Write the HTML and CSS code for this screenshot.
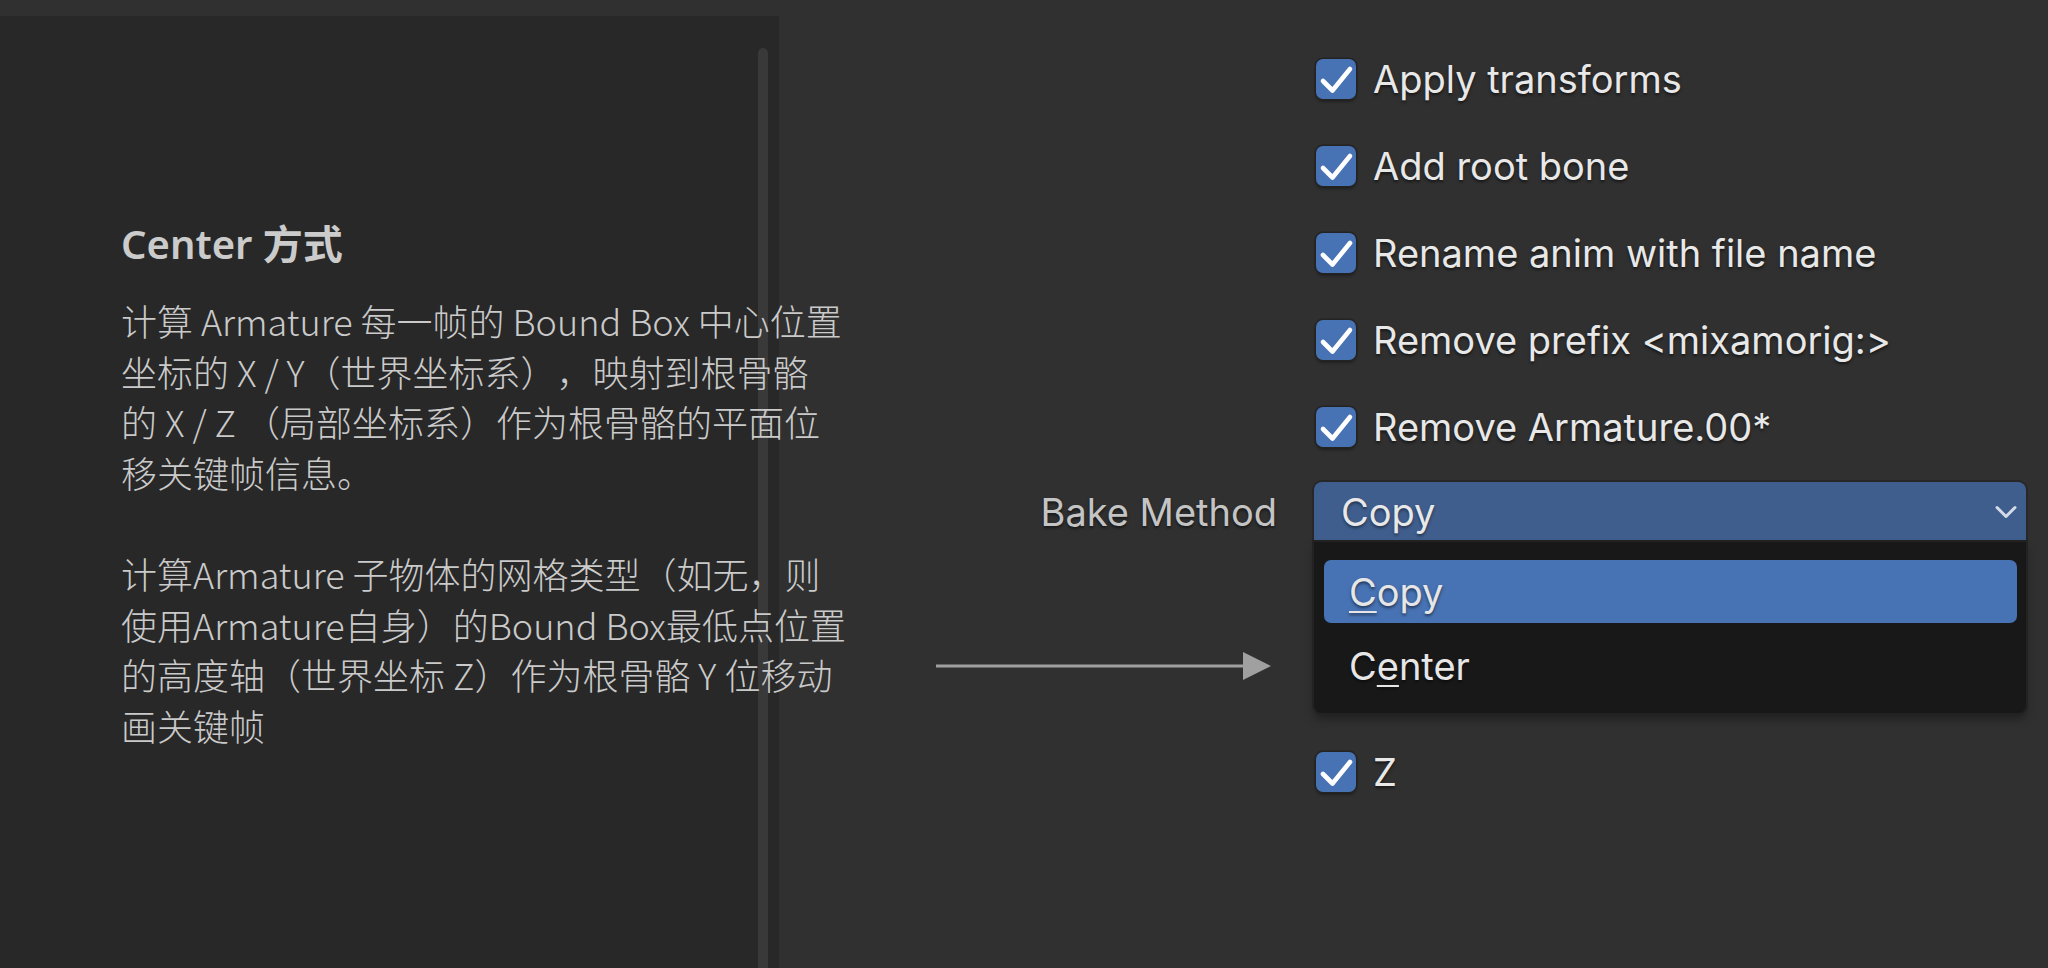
FILE: index.html
```html
<!DOCTYPE html>
<html lang="zh-CN">
<head>
<meta charset="utf-8">
<title>Bake Method</title>
<link rel="stylesheet" href="styles.css">
</head>
<body>
<div class="app">
  <aside class="outline">
    <div class="outline-body">
      <div class="note">
        <h2 class="note-title">Center 方式</h2>
        <p class="note-text">计算 Armature 每一帧的 Bound Box 中心位置<br>坐标的 X / Y（世界坐标系），映射到根骨骼<br>的 X / Z （局部坐标系）作为根骨骼的平面位<br>移关键帧信息。</p>
        <p class="note-text">计算Armature 子物体的网格类型（如无，则<br>使用Armature自身）的Bound Box最低点位置<br>的高度轴（世界坐标 Z）作为根骨骼 Y 位移动<br>画关键帧</p>
      </div>
    </div>
    <div class="scrollbar"></div>
  </aside>

  <section class="props">
    <svg class="arrow" width="335" height="28" viewBox="0 0 335 28">
      <line x1="0" y1="14" x2="308" y2="14" stroke="#a0a0a0" stroke-width="3"/>
      <polygon points="307,0 335,14 307,28" fill="#a0a0a0"/>
    </svg>

    <div class="prop-list">
      <div class="check-row"><span class="check"><svg viewBox="0 0 40 40" width="40" height="40"><path d="M7 22 L16.5 31.5 L34 10" fill="none" stroke="#fff" stroke-width="4.6" stroke-linejoin="round" stroke-linecap="round"/></svg></span><span class="check-label">Apply transforms</span></div>
      <div class="check-row"><span class="check"><svg viewBox="0 0 40 40" width="40" height="40"><path d="M7 22 L16.5 31.5 L34 10" fill="none" stroke="#fff" stroke-width="4.6" stroke-linejoin="round" stroke-linecap="round"/></svg></span><span class="check-label">Add root bone</span></div>
      <div class="check-row"><span class="check"><svg viewBox="0 0 40 40" width="40" height="40"><path d="M7 22 L16.5 31.5 L34 10" fill="none" stroke="#fff" stroke-width="4.6" stroke-linejoin="round" stroke-linecap="round"/></svg></span><span class="check-label">Rename anim with file name</span></div>
      <div class="check-row"><span class="check"><svg viewBox="0 0 40 40" width="40" height="40"><path d="M7 22 L16.5 31.5 L34 10" fill="none" stroke="#fff" stroke-width="4.6" stroke-linejoin="round" stroke-linecap="round"/></svg></span><span class="check-label">Remove prefix &lt;mixamorig:&gt;</span></div>
      <div class="check-row"><span class="check"><svg viewBox="0 0 40 40" width="40" height="40"><path d="M7 22 L16.5 31.5 L34 10" fill="none" stroke="#fff" stroke-width="4.6" stroke-linejoin="round" stroke-linecap="round"/></svg></span><span class="check-label">Remove Armature.00*</span></div>

      <div class="prop-label">Bake Method</div>
      <div class="dropdown">
        <div class="dropdown-head">
          <span class="dd-value">Copy</span>
          <svg class="chevron" width="22" height="14" viewBox="0 0 22 14"><path d="M2 2.5 L11 11.5 L20 2.5" fill="none" stroke="#d4dbe8" stroke-width="3" stroke-linecap="round" stroke-linejoin="round"/></svg>
        </div>
        <div class="menu">
          <div class="menu-item active"><u>C</u>opy</div>
          <div class="menu-item">C<u>e</u>nter</div>
        </div>
      </div>

      <div class="check-row row-z"><span class="check"><svg viewBox="0 0 40 40" width="40" height="40"><path d="M7 22 L16.5 31.5 L34 10" fill="none" stroke="#fff" stroke-width="4.6" stroke-linejoin="round" stroke-linecap="round"/></svg></span><span class="check-label">Z</span></div>
    </div>
  </section>
</div>
</body>
</html>
```

FILE: styles.css
```css
html, body {
  margin: 0;
  padding: 0;
  height: 100%;
}

body {
  background: #303030;
  overflow: hidden;
  font-family: Inter, "Noto Sans", "Noto Sans CJK SC", sans-serif;
}

.app {
  display: flex;
  height: 968px;
}

/* ---------- left panel ---------- */
.outline {
  width: 779px;
  flex: none;
  margin-top: 16px;
  background: #282828;
  display: flex;
}

.outline-body {
  flex: 1;
  min-width: 0;
  padding: 203px 0 0 121px;
}

.scrollbar {
  width: 10px;
  flex: none;
  margin: 32px 11px 0 0;
  background: #393939;
  border-radius: 5px 5px 0 0;
}

.note {
  position: relative;
  z-index: 2;
  color: #cacaca;
  white-space: nowrap;
  text-spacing-trim: space-all;
}

.note-title {
  margin: 0;
  font-family: "Noto Sans", "Noto Sans CJK SC", sans-serif;
  font-size: 40px;
  line-height: 50px;
  font-weight: 600;
  color: #cbcbcb;
}

.note-text {
  margin: 26px 0 0;
  font-family: "Noto Sans CJK SC", sans-serif;
  font-size: 36px;
  line-height: 50.5px;
  font-weight: 300;
}

.note-text + .note-text {
  margin-top: 51px;
}

/* ---------- right panel ---------- */
.props {
  flex: 1;
  position: relative;
}

.arrow {
  position: absolute;
  left: 157px;
  top: 652px;
  display: block;
}

.prop-list {
  display: grid;
  grid-template-columns: 498px 712px;
  grid-template-rows: repeat(5, 87px) 84px repeat(3, 87px);
  column-gap: 37px;
  padding-top: 35px;
}

.check-row {
  grid-column: 2;
  display: flex;
  align-items: center;
  gap: 17px;
  padding-left: 2px;
}

.row-z {
  grid-row: 9;
}

.check {
  width: 40px;
  height: 40px;
  flex: none;
  border-radius: 7px;
  background: #4772b3;
  box-shadow: 0 0 0 1.5px #232323, 0 3px 3px rgba(0, 0, 0, 0.35);
  display: flex;
}

.check svg {
  display: block;
}

.check-label {
  font-size: 38px;
  color: #e8e8e8;
  text-shadow: 0 2px 3px rgba(0, 0, 0, 0.55);
}

.prop-label {
  grid-column: 1;
  align-self: center;
  text-align: right;
  font-size: 38px;
  color: #c4c4c4;
  text-shadow: 0 2px 3px rgba(0, 0, 0, 0.55);
}

.dropdown {
  grid-column: 2;
  align-self: center;
  position: relative;
  height: 60px;
}

.dropdown-head {
  height: 60px;
  box-sizing: border-box;
  background: #3f5e8d;
  border-radius: 8px 8px 0 0;
  box-shadow: 0 0 0 2px #272727;
  display: flex;
  align-items: center;
  justify-content: space-between;
  padding: 0 9px 0 27px;
  font-size: 38px;
  color: #e8e8e8;
  text-shadow: 0 2px 3px rgba(0, 0, 0, 0.45);
}

.chevron {
  display: block;
}

.menu {
  position: absolute;
  z-index: 3;
  top: 60px;
  left: 0;
  right: 0;
  background: #181818;
  border-radius: 0 0 8px 8px;
  box-shadow: 0 0 0 2px #222222, 0 6px 10px rgba(0, 0, 0, 0.35);
  padding: 18px 9px 16px 10px;
  display: flex;
  flex-direction: column;
  gap: 11px;
}

.menu-item {
  height: 63px;
  border-radius: 7px;
  padding-left: 25px;
  display: flex;
  align-items: center;
  font-size: 38px;
  color: #e6e6e6;
  text-shadow: 0 2px 3px rgba(0, 0, 0, 0.5);
}

.menu-item.active {
  background: #4772b3;
}

.menu-item u {
  text-decoration: underline;
  text-decoration-thickness: 2px;
  text-underline-offset: 5px;
}
```
